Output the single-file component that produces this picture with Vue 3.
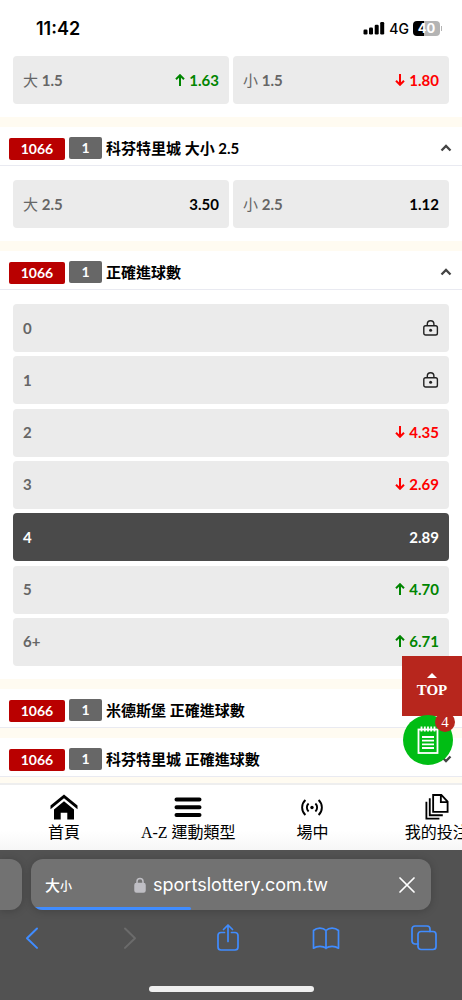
<script setup>
import { ref } from 'vue'

const markets = ref([
  {
    code: '', count: '', title: '', open: true, columns: 2,
    odds: [
      { side: '大', label: '1.5', value: '1.63', trend: 'up' },
      { side: '小', label: '1.5', value: '1.80', trend: 'down' },
    ],
  },
  {
    code: '1066', count: '1', title: '科芬特里城 大小 2.5', open: true, columns: 2,
    odds: [
      { side: '大', label: '2.5', value: '3.50' },
      { side: '小', label: '2.5', value: '1.12' },
    ],
  },
  {
    code: '1066', count: '1', title: '正確進球數', open: true, columns: 1,
    odds: [
      { label: '0', locked: true },
      { label: '1', locked: true },
      { label: '2', value: '4.35', trend: 'down' },
      { label: '3', value: '2.69', trend: 'down' },
      { label: '4', value: '2.89', selected: true },
      { label: '5', value: '4.70', trend: 'up' },
      { label: '6+', value: '6.71', trend: 'up' },
    ],
  },
  { code: '1066', count: '1', title: '米德斯堡 正確進球數', open: false, odds: [] },
  { code: '1066', count: '1', title: '科芬特里城 正確進球數', open: false, odds: [] },
])

const toggle = (m) => { m.open = !m.open }
const pick = (o) => { if (!o.locked) o.selected = !o.selected }
</script>

<template>
  <div class="screen">
    <header class="status">
      <span class="clock">11:42</span>
      <div class="signals">
        <svg width="22" height="14" viewBox="0 0 22 14" aria-hidden="true">
          <rect x="0.5" y="8.5" width="4" height="5" rx="1.2" />
          <rect x="6" y="6.5" width="4" height="7" rx="1.2" />
          <rect x="11.7" y="3.8" width="4" height="9.7" rx="1.2" />
          <rect x="17.2" y="1" width="4" height="12.5" rx="1.2" />
        </svg>
        <span class="network">4G</span>
        <span class="battery"><span class="cell">40</span></span>
      </div>
    </header>

    <main class="markets">
      <section v-for="(m, i) in markets" :key="i" class="market" :class="{ open: m.open }">
        <button v-if="m.title" type="button" class="heading" :aria-expanded="m.open" @click="toggle(m)">
          <span class="code">{{ m.code }}</span>
          <span class="count">{{ m.count }}</span>
          <span class="title">{{ m.title }}</span>
          <svg class="chevron" width="12" height="8" viewBox="0 0 12 8" aria-hidden="true">
            <path d="M1.5 6.5 6 2l4.500 4.500" />
          </svg>
        </button>
        <div v-if="m.open" class="odds" :class="m.columns === 2 ? 'pair' : 'list'">
          <button
            v-for="(o, n) in m.odds" :key="n" type="button"
            class="odd" :class="{ selected: o.selected }" @click="pick(o)"
          >
            <span class="label"><span v-if="o.side" class="side">{{ o.side }}&nbsp;</span>{{ o.label }}</span>
            <svg v-if="o.locked" class="lock" width="16" height="16" viewBox="0 0 16 16" role="img" aria-label="lock">
              <rect x="0.800" y="5.700" width="13.600" height="9.300" rx="1.800" />
              <path d="M4.300 5.700V4a3.300 3.300 0 0 1 6.600 0v1.700" />
              <circle cx="7.600" cy="10.200" r="1.500" />
            </svg>
            <span v-else class="value" :class="o.trend">
              <svg v-if="o.trend" class="arrow" width="10" height="12" viewBox="0 0 10 12" aria-hidden="true">
                <path :d="o.trend === 'up' ? 'M5 12V1.200M1 5.200l4-4 4 4' : 'M5 0v10.800M1 6.800l4 4 4-4'" />
              </svg>
              <span>{{ o.value }}</span>
            </span>
          </button>
        </div>
      </section>

      <div class="floating">
        <button type="button" class="top">
          <svg width="10" height="5" viewBox="0 0 10 5" aria-hidden="true"><path d="M0 5 5 0l5 5z" /></svg>
          <span>TOP</span>
        </button>
        <button type="button" class="slip">
          <svg width="22" height="28" viewBox="0 0 22 28" aria-hidden="true">
            <rect x="1.500" y="3.500" width="19" height="23.500" />
            <path d="M4.500 0.500v5M7.800 0.500v5M11 0.500v5M14.200 0.500v5M17.500 0.500v5M5 11h12M5 14.700h12M5 18.400h12M5 22h12" />
          </svg>
          <span class="bubble">4</span>
        </button>
      </div>
    </main>

    <nav class="tabs">
      <a href="#home" class="tab">
        <svg width="28" height="26" viewBox="0 0 28 26" aria-hidden="true">
          <path class="solid" d="M14 0 27.500 11v3.800L14 3.800.5 14.800V11z" />
          <path class="solid" d="M14 6.800 24 15v10h-6.700v-6.800h-6.600V25H4V15z" />
        </svg>
        <span>首頁</span>
      </a>
      <a href="#sports" class="tab">
        <svg width="28" height="26" viewBox="0 0 28 26" aria-hidden="true">
          <path class="thick" d="M2.500 5h23M2.500 12.700h23M2.500 20.500h23" />
        </svg>
        <span>A-Z 運動類型</span>
      </a>
      <a href="#live" class="tab">
        <svg width="28" height="26" viewBox="0 0 28 26" aria-hidden="true">
          <circle class="solid" cx="14" cy="13" r="1.700" />
          <path class="line" d="M10.600 9a5.500 5.500 0 0 0 0 8M17.400 9a5.500 5.500 0 0 1 0 8M7.400 5.500a10.200 10.200 0 0 0 0 15M20.600 5.500a10.200 10.200 0 0 1 0 15" />
        </svg>
        <span>場中</span>
      </a>
      <a href="#bets" class="tab">
        <svg width="28" height="28" viewBox="0 0 28 28" aria-hidden="true">
          <path class="line" d="M10 1h8.500l6.500 7v10.500H10zM18 1v7.500h7M6.500 4.500V22H20M3 8v17.500h13.500" />
        </svg>
        <span>我的投注</span>
      </a>
    </nav>

    <footer class="browser">
      <div class="addresses">
        <div class="previous"></div>
        <div class="address">
          <button type="button" class="text-size">大<small>小</small></button>
          <span class="url">
            <svg width="12" height="16" viewBox="0 0 12 16" aria-hidden="true">
              <rect x="1" y="6.500" width="10" height="8.500" rx="1.500" />
              <path d="M3 7V4.500a3 3 0 0 1 6 0V7" />
            </svg>
            <span>sportslottery.com.tw</span>
          </span>
          <button type="button" class="stop" aria-label="停止">
            <svg width="16" height="16" viewBox="0 0 16 16" aria-hidden="true"><path d="m1 1 14 14M15 1 1 15" /></svg>
          </button>
          <div class="progress"></div>
        </div>
      </div>
      <div class="tools">
        <button type="button" aria-label="返回">
          <svg width="28" height="28" viewBox="0 0 28 28"><path class="bold" d="M19 4.500 9 14.200l10 9.700" /></svg>
        </button>
        <button type="button" aria-label="前進" disabled>
          <svg width="28" height="28" viewBox="0 0 28 28"><path class="bold" d="m9 4.500 10 9.700L9 23.900" /></svg>
        </button>
        <button type="button" aria-label="分享">
          <svg width="28" height="28" viewBox="0 0 28 28"><path d="M10.500 8.500H7A3 3 0 0 0 4 11.500V23a3 3 0 0 0 3 3h14a3 3 0 0 0 3-3V11.500a3 3 0 0 0-3-3h-3.500M14 17.500V1M9.500 5.500 14 1l4.500 4.500" /></svg>
        </button>
        <button type="button" aria-label="書籤">
          <svg width="28" height="28" viewBox="0 0 28 28"><path d="M14 6.500v18M14 6.500C11 3.300 5 3.300 1.500 6.500v17.700c3.500-2.400 9.500-2.400 12.500 0 3-2.400 9-2.400 12.500 0V6.500C23 3.300 17 3.300 14 6.500z" /></svg>
        </button>
        <button type="button" aria-label="分頁">
          <svg width="28" height="28" viewBox="0 0 28 28"><path d="M8 20H5a3 3 0 0 1-3-3V5a3 3 0 0 1 3-3h12a3 3 0 0 1 3 3v2.500" /><rect x="8" y="7.500" width="18" height="18" rx="3" /></svg>
        </button>
      </div>
      <div class="home-bar"></div>
    </footer>
  </div>
</template>

<style>
body {
  margin: 0;
  background: #fff;
}
</style>

<style scoped>
.screen {
  display: flex;
  flex-direction: column;
  height: 100vh;
  overflow: hidden;
  font-family: Lato, "Noto Sans CJK TC", sans-serif;
  color: #000;
}
button {
  margin: 0;
  padding: 0;
  border: 0;
  background: none;
  font: inherit;
  color: inherit;
  cursor: pointer;
}
svg {
  display: block;
  flex: none;
}

/* status bar */
.status {
  flex: none;
  display: flex;
  align-items: center;
  justify-content: space-between;
  height: 56px;
  padding: 0 20px 0 36px;
  font-family: Inter, sans-serif;
}
.clock {
  font-size: 18px;
  font-weight: 600;
}
.signals {
  display: flex;
  align-items: center;
  gap: 4px;
}
.network {
  font-size: 14px;
  font-weight: 500;
}
.battery {
  position: relative;
  padding-right: 2px;
}
.battery::after {
  content: "";
  position: absolute;
  right: 0;
  top: 5px;
  width: 1px;
  height: 5px;
  background: #b4b4b4;
}
.cell {
  display: block;
  width: 27px;
  border-radius: 4px;
  background: linear-gradient(90deg, #000 40%, #b4b4b4 40%);
  color: #fff;
  font-size: 13px;
  font-weight: 700;
  line-height: 15px;
  text-align: center;
}

/* markets */
.markets {
  position: relative;
  flex: 1;
  min-height: 0;
  display: flex;
  flex-direction: column;
  gap: 10px;
  overflow: hidden;
  background: #fffbf1;
}
.market {
  flex: none;
  background: #fff;
}
.heading {
  display: flex;
  align-items: center;
  gap: 4px;
  width: 100%;
  height: 39px;
  padding: 4px 10px 0 9px;
  border-bottom: 1px solid #e9eaf1;
  text-align: left;
}
.code,
.count {
  box-sizing: border-box;
  height: 22px;
  border-radius: 2px;
  color: #fff;
  font-size: 14px;
  font-weight: 700;
  line-height: 22px;
  text-align: center;
}
.code {
  width: 56px;
  margin-top: 2px;
  background: #b90000;
}
.count {
  width: 33px;
  background: #676767;
}
.title {
  flex: 1;
  font-size: 15px;
  font-weight: 700;
  line-height: 24px;
}
.chevron {
  fill: none;
  stroke: #444;
  stroke-width: 2.3;
}
.market:not(.open) .chevron {
  transform: rotate(180deg);
}
.odds {
  display: grid;
  padding: 14px 13px 13px;
}
.market:first-child .odds {
  padding-top: 0;
}
.pair {
  grid-template-columns: 1fr 1fr;
  gap: 4px;
}
.list {
  align-content: space-between;
  min-height: 362px;
}
.odd {
  box-sizing: border-box;
  display: flex;
  align-items: center;
  justify-content: space-between;
  height: 48px;
  padding: 0 10px 1px;
  border-radius: 4px;
  background: #ebebeb;
  font-size: 15px;
  line-height: 20px;
}
.label {
  color: #666;
  font-weight: 700;
}
.side {
  font-weight: 400;
}
.value {
  display: flex;
  align-items: center;
  gap: 4px;
  font-weight: 700;
}
.arrow {
  fill: none;
  stroke: currentColor;
  stroke-width: 2;
}
.up {
  color: #008500;
}
.down {
  color: #f00;
}
.selected {
  background: #4a4a4a;
}
.selected .label,
.selected .value {
  color: #fff;
}
.lock {
  fill: none;
  stroke: #222;
  stroke-width: 1.4;
}
.lock circle {
  fill: #222;
  stroke: none;
}

/* floating buttons */
.floating {
  position: absolute;
  right: 0;
  bottom: 18px;
  display: flex;
  flex-direction: column;
}
.top {
  display: flex;
  flex-direction: column;
  align-items: center;
  justify-content: center;
  gap: 3px;
  width: 60px;
  height: 60px;
  background: #b7261d;
  color: #fff;
  font-family: "Liberation Serif", serif;
  font-size: 15px;
  font-weight: 700;
  line-height: 18px;
}
.top svg {
  fill: #fff;
}
.slip {
  position: relative;
  display: flex;
  align-items: center;
  justify-content: center;
  width: 50px;
  height: 50px;
  margin: -1px 0 0 1px;
  border-radius: 50%;
  background: #00bd14;
}
.slip svg {
  fill: none;
  stroke: #fff;
  stroke-width: 1.8;
}
.bubble {
  position: absolute;
  right: -2px;
  top: -3px;
  width: 20px;
  height: 20px;
  border-radius: 50%;
  background: #b7261d;
  color: #fff;
  font-family: "Liberation Serif", serif;
  font-size: 15px;
  line-height: 20px;
}

/* bottom tabs */
.tabs {
  flex: none;
  display: grid;
  grid-auto-flow: column;
  grid-auto-columns: 27%;
  padding-left: 2px;
  border-top: 2px solid #eee;
  overflow: hidden;
  background: linear-gradient(#fff 70%, #f6f6f6);
}
.tab {
  display: flex;
  flex-direction: column;
  align-items: center;
  height: 65px;
  box-sizing: border-box;
  padding-top: 9px;
  color: #000;
  font-family: "Liberation Serif", "Noto Sans CJK TC", serif;
  font-size: 16px;
  line-height: 24px;
  text-decoration: none;
  white-space: nowrap;
}
.tab svg {
  height: 27px;
}
.solid {
  fill: #000;
}
.thick {
  stroke: #000;
  stroke-width: 4;
  stroke-linecap: round;
}
.line {
  fill: none;
  stroke: #000;
  stroke-width: 1.9;
}

/* browser chrome */
.browser {
  flex: none;
  box-sizing: border-box;
  height: 150px;
  padding-top: 9px;
  background: #525252;
  font-family: Inter, "Noto Sans CJK TC", sans-serif;
}
.addresses {
  display: flex;
  gap: 9px;
  padding-right: 31px;
}
.previous {
  width: 22px;
  border-radius: 0 12px 12px 0;
  background: #727272;
  box-shadow: 0 1px 8px #0003;
}
.address {
  position: relative;
  flex: 1;
  display: grid;
  grid-template-columns: 1fr auto 1fr;
  align-items: center;
  height: 51px;
  padding: 0 14px;
  border-radius: 12px;
  overflow: hidden;
  background: #727272;
  box-shadow: 0 1px 8px #0003;
  color: #fff;
}
.text-size {
  justify-self: start;
  font-size: 15px;
  font-weight: 500;
}
.text-size small {
  font-size: 12px;
}
.url {
  display: flex;
  align-items: center;
  gap: 7px;
  font-size: 18px;
}
.url svg {
  fill: none;
  stroke: #bfbec4;
  stroke-width: 1.5;
}
.url rect {
  fill: #bfbec4;
}
.stop {
  justify-self: end;
  padding-right: 2px;
}
.stop svg {
  stroke: #fff;
  stroke-width: 1.7;
  stroke-linecap: round;
}
.progress {
  position: absolute;
  left: 0;
  bottom: 0;
  width: 40%;
  height: 3px;
  border-radius: 0 2px 2px 0;
  background: #408cff;
}
.tools {
  display: flex;
  justify-content: space-between;
  padding: 14px 24px 0 18px;
  color: #408cff;
}
.tools svg {
  fill: none;
  stroke: currentColor;
  stroke-width: 1.7;
  stroke-linecap: round;
  stroke-linejoin: round;
}
.tools .bold {
  stroke-width: 2;
}
.tools button:disabled {
  color: #6b6b6b;
}
.home-bar {
  width: 165px;
  height: 6px;
  margin: 34px auto 0;
  border-radius: 3px;
  background: #efefef;
}
</style>
